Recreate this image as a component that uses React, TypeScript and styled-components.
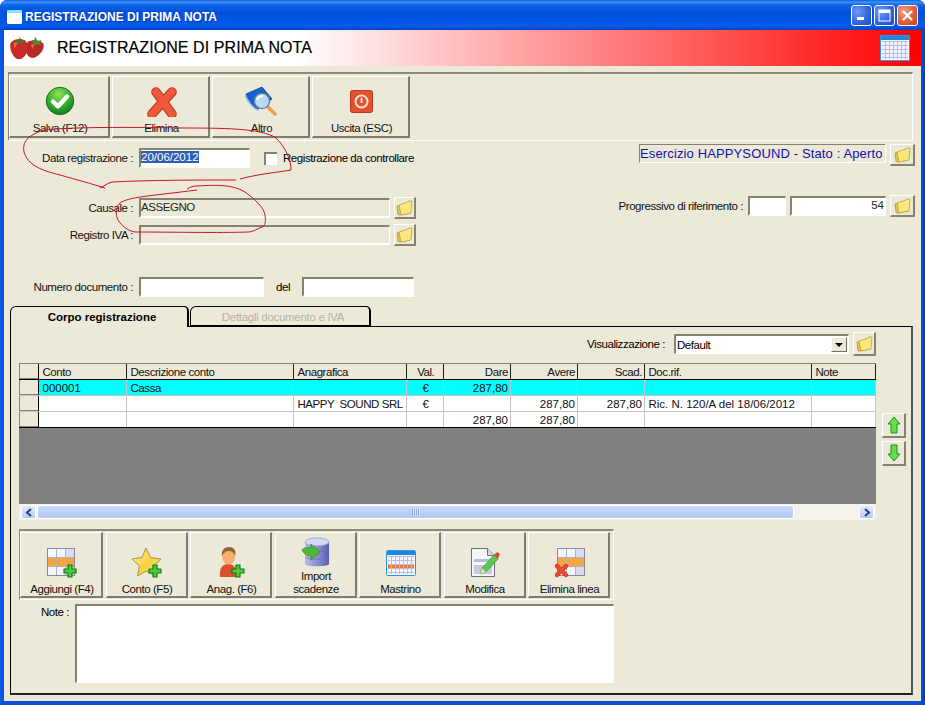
import React from "react";
import styled, { createGlobalStyle, css } from "styled-components";

const Global = createGlobalStyle`
  html, body { margin: 0; padding: 0; background: #fff; }
  body { font-family: "Liberation Sans", Arial, sans-serif; font-size: 12px; color: #000; }
`;

const tightText = css`
  font-size: 11.5px;
  letter-spacing: -0.44px;
`;

const Window = styled.div`
  position: relative;
  width: 925px;
  height: 705px;
  overflow: hidden;
  display: flex;
  flex-direction: column;
  background: linear-gradient(90deg, #0a5ae6 0, #0a50d8 4px, #0a50d8 921px, #0040c0 925px);
  border-radius: 7px 7px 0 0;
`;
const TitleBar = styled.div`
  height: 30px;
  flex: none;
  display: flex;
  align-items: center;
  padding: 3px 7px 0 7px;
  box-sizing: border-box;
  background: linear-gradient(180deg, #0a5fe0 0, #3f90f8 2px, #0f66ea 5px, #0050dc 12px, #0058e6 22px, #0a5ceb 26px, #0040c8 30px);
  color: #fff;
`;
const TitleText = styled.span`
  margin-left: 3px;
  font-weight: bold;
  font-size: 12px;
  white-space: nowrap;
  flex: 1;
  text-shadow: 1px 1px 0 #0a3aa8;
`;
const WinButton = styled.div<{ $close?: boolean }>`
  width: 21px;
  height: 21px;
  margin: -2px 0 0 2px;
  box-sizing: border-box;
  border: 1px solid #fff;
  border-radius: 3px;
  display: flex;
  align-items: center;
  justify-content: center;
  background: ${(p) =>
    p.$close
      ? "radial-gradient(circle at 30% 30%, #f0a08a, #e0603a 55%, #c83a1a)"
      : "radial-gradient(circle at 30% 30%, #6f9cf5, #2f62dc 60%, #1e48c0)"};
`;
const Body = styled.div`
  flex: 1;
  margin: 0 4px 4px 4px;
  background: #ece9d8;
  display: flex;
  flex-direction: column;
  min-height: 0;
`;
const Header = styled.div`
  height: 36px;
  flex: none;
  display: flex;
  align-items: center;
  padding: 0 11px 0 5px;
  background: linear-gradient(90deg, #fff 0, #fff 32%, #ff0000 100%);
`;
const HeaderTitle = styled.div`
  margin-left: 12px;
  flex: 1;
  font-size: 16px;
  letter-spacing: 0.07px;
  white-space: nowrap;
  -webkit-text-stroke: 0.2px #000;
`;
const Toolbar = styled.div`
  margin: 6px 8px 0 4px;
  height: 69px;
  box-sizing: border-box;
  border-top: 2px solid #8c8a78;
  border-left: 1px solid #8c8a78;
  border-bottom: 1px solid #fff;
  border-right: 1px solid #fff;
  padding-top: 2px;
  display: grid;
  grid-template-columns: 101px 98px 98px 98px;
  gap: 2px;
  align-items: start;
`;
const ToolButton = styled.div<{ $top: number; $h: number }>`
  height: ${(p) => p.$h}px;
  box-sizing: border-box;
  padding-top: ${(p) => p.$top}px;
  padding-left: 2px;
  display: flex;
  flex-direction: column;
  align-items: center;
  text-align: center;
  background: #ece9d8;
  border-top: 1px solid #fff;
  border-left: 1px solid #fff;
  border-right: 2px solid #7e7c6c;
  border-bottom: 2px solid #7e7c6c;
  ${tightText}
  line-height: 13px;
  color: #111;
`;
const ToolIcon = styled.div<{ $h: number }>`
  height: ${(p) => p.$h}px;
  display: flex;
  align-items: center;
  justify-content: center;
`;
const ToolLabel = styled.div`
  white-space: nowrap;
`;
const FormArea = styled.div`
  display: flex;
  justify-content: space-between;
  height: 156px;
  flex: none;
  padding-right: 6px;
`;
const FormCol = styled.div`
  display: flex;
  flex-direction: column;
`;
const FormRow = styled.div<{ $mt: number }>`
  display: flex;
  align-items: center;
  height: 20px;
  margin-top: ${(p) => p.$mt}px;
`;
const RowLabel = styled.div`
  width: 129px;
  margin-right: 6px;
  text-align: right;
  ${tightText}
  white-space: nowrap;
  color: #111;
`;
const Field = styled.div<{ $w: number; $disabled?: boolean; $right?: boolean; $ml?: number; $tight?: boolean }>`
  width: ${(p) => p.$w}px;
  height: 20px;
  flex: none;
  margin-left: ${(p) => p.$ml ?? 0}px;
  box-sizing: border-box;
  border-top: 2px solid #85836f;
  border-left: 2px solid #85836f;
  border-right: 1px solid #fff;
  border-bottom: 2px solid #fff;
  background: ${(p) => (p.$disabled ? "#ece9d8" : "#fff")};
  padding: 0 1px 0 0;
  font-size: 11.5px;
  letter-spacing: ${(p) => (p.$tight ? -0.44 : 0)}px;
  line-height: 15px;
  text-align: ${(p) => (p.$right ? "right" : "left")};
  white-space: nowrap;
  overflow: hidden;
  color: #222;
`;
const Selected = styled.span`
  background: #2f5fb5;
  color: #fff;
`;
const Checkbox = styled.div`
  width: 13px;
  height: 13px;
  margin: 1px 0 0 14px;
  box-sizing: border-box;
  border-top: 2px solid #85836f;
  border-left: 2px solid #85836f;
  background: #fff;
`;
const CheckLabel = styled.div`
  margin-left: 6px;
  ${tightText}
  white-space: nowrap;
`;
const FolderButton = styled.div<{ $w?: number; $h?: number; $ml?: number }>`
  width: ${(p) => p.$w ?? 22}px;
  height: ${(p) => p.$h ?? 22}px;
  margin-left: ${(p) => p.$ml ?? 4}px;
  flex: none;
  box-sizing: border-box;
  background: #ece9d8;
  border-top: 1px solid #fff;
  border-left: 1px solid #fff;
  border-right: 2px solid #85836f;
  border-bottom: 2px solid #85836f;
  display: flex;
  align-items: center;
  justify-content: center;
`;
const StatusRow = styled.div`
  display: flex;
  justify-content: flex-end;
  align-items: flex-start;
  margin-top: 3px;
`;
const StatusBox = styled.div`
  width: 247px;
  height: 19px;
  box-sizing: border-box;
  border-top: 1px solid #85836f;
  border-left: 1px solid #85836f;
  border-bottom: 1px solid #fff;
  border-right: 1px solid #fff;
  color: #1010b0;
  font-size: 13px;
  letter-spacing: 0.13px;
  line-height: 17px;
  white-space: nowrap;
`;
const ProgRow = styled.div`
  display: flex;
  align-items: center;
  margin-top: 29px;
  justify-content: flex-end;
`;
const ProgLabel = styled.div`
  ${tightText}
  margin-right: 5px;
  white-space: nowrap;
  color: #111;
`;
const DelLabel = styled.div`
  width: 38px;
  text-align: center;
  ${tightText}
`;
const Tabs = styled.div`
  display: flex;
  margin: 9px 0 0 6px;
  height: 20px;
  flex: none;
  position: relative;
  z-index: 1;
  gap: 1px;
`;
const Tab = styled.div<{ $active?: boolean; $w: number }>`
  width: ${(p) => p.$w}px;
  height: ${(p) => (p.$active ? 21 : 20)}px;
  box-sizing: border-box;
  padding-left: 6px;
  border: 1px solid #000;
  border-right-width: 2px;
  border-bottom: ${(p) => (p.$active ? "none" : "1px solid #000")};
  border-radius: 6px 5px 0 0;
  background: #ece9d8;
  text-align: center;
  font-size: 11.5px;
  letter-spacing: ${(p) => (p.$active ? 0 : -0.3)}px;
  line-height: 20px;
  font-weight: ${(p) => (p.$active ? "bold" : "normal")};
  color: ${(p) => (p.$active ? "#000" : "#b4b2a6")};
`;
const Panel = styled.div`
  flex: none;
  height: 369px;
  margin: 0 8px 0 6px;
  box-sizing: border-box;
  border-top: 1px solid #000;
  border-left: 1px solid #000;
  border-bottom: 2px solid #222;
  border-right: 2px solid #555;
  padding: 5px 0 0 8px;
`;
const ViewRow = styled.div`
  width: 857px;
  height: 24px;
  display: flex;
  align-items: center;
  justify-content: flex-end;
`;
const ViewLabel = styled.span`
  ${tightText}
`;
const Select = styled.div`
  width: 175px;
  height: 20px;
  margin-left: 9px;
  box-sizing: border-box;
  border-top: 2px solid #85836f;
  border-left: 2px solid #85836f;
  border-right: 1px solid #fff;
  border-bottom: 1px solid #fff;
  background: #fff;
  display: flex;
  align-items: center;
  justify-content: space-between;
  padding: 0 1px 0 1px;
  ${tightText}
`;
const SelectArrow = styled.div`
  width: 16px;
  height: 15px;
  box-sizing: border-box;
  background: #ece9d8;
  border-top: 1px solid #fff;
  border-left: 1px solid #fff;
  border-right: 1px solid #716f64;
  border-bottom: 1px solid #716f64;
  display: flex;
  align-items: center;
  justify-content: center;
  &::after {
    content: "";
    border-left: 4px solid transparent;
    border-right: 4px solid transparent;
    border-top: 4px solid #000;
  }
`;
const GridWrap = styled.div`
  display: flex;
  margin-top: 7px;
`;
const DataGrid = styled.div`
  width: 857px;
  height: 157px;
  flex: none;
  display: flex;
  flex-direction: column;
  box-sizing: border-box;
  border-top: 1px solid #85836f;
  background: #808080;
`;
const Row = styled.div<{ $h: number; $bg: string; $line: string }>`
  display: grid;
  grid-template-columns: 20px 88px 167px 113px 37px 67px 67px 67px 167px 64px;
  height: ${(p) => p.$h}px;
  flex: none;
  box-sizing: border-box;
  background: ${(p) => p.$bg};
  border-bottom: ${(p) => `1px solid ${p.$line}`};
`;
const Cell = styled.div<{ $right?: boolean; $center?: boolean; $line: string; $digits?: boolean }>`
  box-sizing: border-box;
  border-right: ${(p) => `1px solid ${p.$line}`};
  padding: 1px 2px 0 3.5px;
  font-size: 11.5px;
  letter-spacing: ${(p) => (p.$digits ? 0 : -0.44)}px;
  line-height: 14px;
  white-space: pre;
  overflow: hidden;
  text-align: ${(p) => (p.$right ? "right" : p.$center ? "center" : "left")};
  color: #111;
`;
const Indicator = styled.div`
  box-sizing: border-box;
  background: #ece9d8;
  border-right: 1px solid #000;
  border-left: 1px solid #85836f;
  box-shadow: inset 0 -1px 0 #85836f;
`;
const GridGap = styled.div`
  flex: 1;
  background: #808080;
`;
const ScrollBar = styled.div`
  height: 16px;
  flex: none;
  box-sizing: border-box;
  background: #f4f2ea;
  display: flex;
  align-items: center;
  padding: 1px 2px 1px 2px;
`;
const ScrollButton = styled.div`
  width: 15px;
  height: 14px;
  flex: none;
  border-radius: 2px;
  border: 1px solid #fff;
  box-sizing: border-box;
  background: linear-gradient(180deg, #e2ebfd, #b6caf5);
  display: flex;
  align-items: center;
  justify-content: center;
`;
const ScrollThumb = styled.div`
  width: 757px;
  height: 14px;
  flex: none;
  margin-left: 1px;
  box-sizing: border-box;
  border: 1px solid #fff;
  border-radius: 3px;
  background: linear-gradient(180deg, #c8d8f8, #b4c9f3);
  display: flex;
  align-items: center;
  justify-content: center;
`;
const Grip = styled.div`
  width: 8px;
  height: 6px;
  background: repeating-linear-gradient(90deg, #8fa8dc 0, #8fa8dc 1px, #e0e8fa 1px, #e0e8fa 2px);
`;
const ScrollTrack = styled.div`
  flex: 1;
`;
const SideCol = styled.div`
  margin: 50px 0 0 6px;
  display: flex;
  flex-direction: column;
  gap: 3px;
`;
const LowerBar = styled.div`
  width: 595px;
  height: 71px;
  margin-top: 9px;
  box-sizing: border-box;
  border-top: 2px solid #8c8a78;
  border-left: 1px solid #8c8a78;
  border-bottom: 1px solid #fff;
  border-right: 1px solid #fff;
  padding: 1px 0 0 0;
  display: grid;
  grid-template-columns: 83px repeat(6, 82px);
  gap: 2.5px;
  align-items: start;
`;
const NoteRow = styled.div`
  display: flex;
  width: 595px;
  margin-top: 4px;
`;
const NoteLabel = styled.div`
  width: 50px;
  margin-right: 6px;
  text-align: right;
  ${tightText}
  line-height: 15px;
  padding-top: 1px;
`;
const NoteBox = styled.div`
  flex: 1;
  height: 79px;
  box-sizing: border-box;
  border-top: 2px solid #85836f;
  border-left: 2px solid #85836f;
  border-right: 1px solid #fff;
  border-bottom: 1px solid #fff;
  background: #fff;
`;
const Annotation = styled.svg`
  position: absolute;
  left: 0;
  top: 0;
  width: 925px;
  height: 705px;
  pointer-events: none;
`;

const Plus = ({ x, y }: { x: number; y: number }) => (
  <path
    transform={`translate(${x} ${y})`}
    d="M4 0h4v4h4v4H8v4H4V8H0V4h4z"
    fill="#55c83c"
    stroke="#0f7a14"
    strokeWidth="1.2"
    strokeLinejoin="round"
  />
);

const Strawberries = () => (
  <svg width="36" height="24" viewBox="0 0 38 26">
    <path d="M20 6c6-2 15-1 17 3 1 5-3 11-9 14-4 2-9-1-10-6-1-4 0-8 2-11z" fill="#b92a26" />
    <path d="M1 8c3-5 12-6 16-3 4 4 4 11 0 16-3 4-7 5-10 3C3 21 0 14 1 8z" fill="#c82a26" />
    <path d="M5 8c2-2 5-2 6-1-3 1-5 4-5 7-1-2-2-4-1-6z" fill="#e66a5a" />
    <path d="M24 9c2-1 4-1 5 0-2 1-3 3-4 5-1-2-2-3-1-5z" fill="#dc5c4e" />
    <path d="M6 4l4 1 1-4 2 4 4-1-2 3-5 1-3-1z" fill="#4d7a2a" />
    <path d="M24 5l3-1 1-3 2 4 5 0-2 3 3 3-5-2-4 1z" fill="#55852e" />
  </svg>
);
const Calendar = ({ w, h, hot }: { w: number; h: number; hot?: boolean }) => (
  <svg width={w} height={h} viewBox="0 0 30 26">
    <rect x="0.5" y="0.5" width="29" height="25" rx="1" fill="#f4f6ff" stroke="#2f96e8" />
    <rect x="1" y="1" width="28" height="4" fill="#1f86e0" />
    {hot && <rect x="2" y="14" width="26" height="4" fill="#f47a3c" />}
    {[6, 10, 14, 18, 22].map((y) => (
      <line key={y} x1="2" x2="28" y1={y + 0.5} y2={y + 0.5} stroke="#b9bce0" />
    ))}
    {[5, 9, 13, 17, 21, 25].map((x) => (
      <line key={x} y1="6" y2="24" x1={x + 0.5} x2={x + 0.5} stroke="#b9bce0" />
    ))}
  </svg>
);
const Folder = () => (
  <svg width="17" height="16" viewBox="0 0 17 16">
    <path d="M1 6l1 8c0 1 1 1 2 1l10-2 1-9z" fill="#e8c64a" stroke="#a08a30" strokeWidth="0.7" />
    <path d="M3 5l9-3 1-1 3 0-1 12-10 2z" fill="#fbe77e" stroke="#b09a38" strokeWidth="0.7" />
  </svg>
);
const CheckIcon = () => (
  <svg width="30" height="30" viewBox="0 0 30 30">
    <defs>
      <radialGradient id="chk" cx="45%" cy="25%" r="80%">
        <stop offset="0" stopColor="#8ee05a" />
        <stop offset="0.6" stopColor="#2fa82a" />
        <stop offset="1" stopColor="#0c7a1a" />
      </radialGradient>
    </defs>
    <circle cx="15" cy="15" r="13.7" fill="url(#chk)" stroke="#15701c" />
    <path d="M8 15.5l5 5 9-10" fill="none" stroke="#fff" strokeWidth="4.4" strokeLinecap="round" strokeLinejoin="round" />
  </svg>
);
const CrossIcon = () => (
  <svg width="30" height="32" viewBox="0 0 30 32">
    <g transform="translate(0 2)">
      <path d="M5 27L25 5M9 5l16 22" stroke="#b8331a" strokeWidth="9.5" strokeLinecap="round" />
      <path d="M5 27L25 5M9 5l16 22" stroke="#f0583a" strokeWidth="7.5" strokeLinecap="round" />
    </g>
  </svg>
);
const BookIcon = () => (
  <svg width="34" height="30" viewBox="0 0 34 30">
    <path d="M1 8L17 1l10 12-14 10C8 21 3 14 1 8z" fill="#1760d0" stroke="#0c3f9c" strokeWidth="0.8" />
    <path d="M1 8c2 6 7 13 12 15l1 2C8 23 2 16 0 10z" fill="#7fb0ee" />
    <line x1="23" y1="21" x2="30" y2="28" stroke="#e8a050" strokeWidth="3.6" strokeLinecap="round" />
    <circle cx="17" cy="15" r="7.6" fill="#b8daf4" stroke="#6a7f98" strokeWidth="1.4" />
    <path d="M12 14c1-3 4-4 6-4" stroke="#fff" strokeWidth="2" fill="none" />
  </svg>
);
const PowerIcon = () => (
  <svg width="23" height="23" viewBox="0 0 23 23">
    <rect x="0.5" y="0.5" width="22" height="22" rx="2" fill="#e2502e" stroke="#b83a1e" />
    <circle cx="11.5" cy="11.5" r="6" fill="none" stroke="#fbe0d0" strokeWidth="2" />
    <line x1="11.5" y1="8" x2="11.5" y2="13" stroke="#fbe0d0" strokeWidth="2" />
  </svg>
);
const GridCells = () => (
  <>
    <rect x="0.5" y="0.5" width="27" height="27" fill="#f4f6ff" stroke="#8a8a92" />
    <rect x="1" y="10" width="26" height="9" fill="#f5a53c" />
    <rect x="19" y="1" width="8" height="9" fill="#d8dcf4" />
    <rect x="19" y="19" width="8" height="8" fill="#d8dcf4" />
    <path d="M9.5 1v26M18.5 1v26M1 9.5h26M1 18.5h26" stroke="#b4b4c0" />
  </>
);
const GridPlusIcon = () => (
  <svg width="30" height="30" viewBox="0 0 30 30">
    <GridCells />
    <Plus x={17} y={17} />
  </svg>
);
const GridXIcon = () => (
  <svg width="30" height="30" viewBox="0 0 30 30">
    <g transform="translate(2 0)">
      <GridCells />
    </g>
    <path d="M2 27l9-9M2 18l9 9" stroke="#b8331a" strokeWidth="4.4" strokeLinecap="round" />
    <path d="M2 27l9-9M2 18l9 9" stroke="#ee4a30" strokeWidth="3" strokeLinecap="round" />
  </svg>
);
const StarIcon = () => (
  <svg width="32" height="32" viewBox="0 0 32 32">
    <defs>
      <linearGradient id="star" x1="0" y1="0" x2="1" y2="1">
        <stop offset="0" stopColor="#fdf3b0" />
        <stop offset="0.55" stopColor="#f6d23c" />
        <stop offset="1" stopColor="#fbeea0" />
      </linearGradient>
    </defs>
    <path
      d="M15 1l4.5 9.5 10.5 1.5-7.5 7 2 10-9.5-5-8.5 5 2-10L1 12l10-1.500z"
      fill="url(#star)"
      stroke="#a08a3a"
      strokeWidth="0.9"
      strokeLinejoin="round"
    />
    <Plus x={18} y={18} />
  </svg>
);
const PersonIcon = () => (
  <svg width="28" height="32" viewBox="0 0 28 32">
    <path d="M2 30c-1-8 2-13 8-13s9 4 10 13z" fill="#d8522a" />
    <ellipse cx="10.500" cy="9.500" rx="6.500" ry="8" fill="#f4b070" />
    <path d="M4 9C3 3 7 0 11 0s8 3 6 9c-1-3-3-5-6-5S5 6 4 9z" fill="#8a6a2a" />
    <Plus x={14} y={18} />
  </svg>
);
const DbIcon = () => (
  <svg width="30" height="32" viewBox="0 0 30 32">
    <defs>
      <linearGradient id="db" x1="0" x2="1" y1="0" y2="0">
        <stop offset="0" stopColor="#b8bcec" />
        <stop offset="0.6" stopColor="#8288cc" />
        <stop offset="1" stopColor="#5a5ea8" />
      </linearGradient>
    </defs>
    <path d="M4 5v22c0 3 24 3 24 0V5z" fill="url(#db)" />
    <ellipse cx="16" cy="5" rx="12" ry="4" fill="#d4d8f6" stroke="#8a8ecc" strokeWidth="0.7" />
    <path d="M4 12c2 3 22 3 24 0M4 20c2 3 22 3 24 0" stroke="#6a6eb4" strokeWidth="0.7" fill="none" />
    <path d="M1 13c3-3 6-3 9-2v-4l9 8-9 8v-4c-4 0-7-2-9-6z" fill="#4fb83a" stroke="#2e8a24" strokeWidth="0.7" />
  </svg>
);
const DocIcon = () => (
  <svg width="30" height="32" viewBox="0 0 30 32">
    <path d="M1.500 1.500h16l7 7v21h-23z" fill="#f3f5fb" stroke="#6a6e80" />
    <path d="M17.500 1.500v7h7" fill="#cfd6ea" stroke="#6a6e80" />
    <rect x="4" y="12" width="18" height="3" fill="#b8bcd0" />
    <rect x="4" y="18" width="18" height="9" fill="#c4c8e0" />
    <path d="M10 27l2-6L24 8l4 4-12 13z" fill="#5ec84a" stroke="#2e8a24" strokeWidth="0.6" />
    <path d="M24 8l2-2c1-1 2-1 3 0s1 2 0 3l-1 3z" fill="#d8483a" />
    <path d="M10 27l2-6 4 4z" fill="#f0d8b0" />
  </svg>
);
const ArrowIcon = ({ down }: { down?: boolean }) => (
  <svg width="14" height="18" viewBox="0 0 14 18">
    <path
      transform={down ? "rotate(180 7 9)" : undefined}
      d="M7 1l6 7H10v9H4V8H1z"
      fill="#62e04a"
      stroke="#1f8a24"
      strokeLinejoin="round"
    />
  </svg>
);
const Chevron = ({ right }: { right?: boolean }) => (
  <svg width="8" height="9" viewBox="0 0 8 9">
    <path d={right ? "M2 1l4 3.500L2 8" : "M6 1L2 4.500 6 8"} fill="none" stroke="#24408c" strokeWidth="2" />
  </svg>
);

const columns: { text: string; right?: boolean; center?: boolean }[] = [
  { text: "Conto" },
  { text: "Descrizione conto" },
  { text: "Anagrafica" },
  { text: "Val.", center: true },
  { text: "Dare", right: true },
  { text: "Avere", right: true },
  { text: "Scad.", right: true },
  { text: "Doc.rif." },
  { text: "Note" },
];
const rows: { bg: string; cells: string[] }[] = [
  { bg: "#00ffff", cells: ["000001", "Cassa", "", "€", "287,80", "", "", "", ""] },
  { bg: "#fff", cells: ["", "", "HAPPY  SOUND SRL", "€", "", "287,80", "287,80", "Ric. N. 120/A del 18/06/2012", ""] },
  { bg: "#fff", cells: ["", "", "", "", "287,80", "287,80", "", "", ""] },
];
const topButtons = [
  { label: "Salva (F12)", icon: <CheckIcon /> },
  { label: "Elimina", icon: <CrossIcon /> },
  { label: "Altro", icon: <BookIcon /> },
  { label: "Uscita (ESC)", icon: <PowerIcon /> },
];
const lowerButtons = [
  { label: ["Aggiungi (F4)"], icon: <GridPlusIcon />, h: 40, top: 10 },
  { label: ["Conto (F5)"], icon: <StarIcon />, h: 40, top: 10 },
  { label: ["Anag. (F6)"], icon: <PersonIcon />, h: 40, top: 10 },
  { label: ["Import", "scadenze"], icon: <DbIcon />, h: 34, top: 3 },
  { label: ["Mastrino"], icon: <Calendar w={30} h={26} hot />, h: 40, top: 10 },
  { label: ["Modifica"], icon: <DocIcon />, h: 40, top: 10 },
  { label: ["Elimina linea"], icon: <GridXIcon />, h: 40, top: 10 },
];

export default function App() {
  return (
    <Window>
      <Global />
      <TitleBar>
        <svg width="15" height="14" viewBox="0 0 15 14">
          <rect width="15" height="14" rx="1.500" fill="#fff" />
          <rect width="15" height="3" rx="1" fill="#7fe8f8" />
        </svg>
        <TitleText>REGISTRAZIONE DI PRIMA NOTA</TitleText>
        <WinButton>
          <svg width="11" height="11" viewBox="0 0 11 11">
            <rect x="1" y="7" width="7" height="3" fill="#fff" />
          </svg>
        </WinButton>
        <WinButton>
          <svg width="13" height="13" viewBox="0 0 13 13">
            <rect x="1" y="1" width="11" height="11" fill="none" stroke="#fff" />
            <rect x="1" y="1" width="11" height="3" fill="#fff" />
          </svg>
        </WinButton>
        <WinButton $close>
          <svg width="13" height="13" viewBox="0 0 13 13">
            <path d="M2 2l9 9M11 2l-9 9" stroke="#fff" strokeWidth="2.200" />
          </svg>
        </WinButton>
      </TitleBar>
      <Body>
        <Header>
          <Strawberries />
          <HeaderTitle>REGISTRAZIONE DI PRIMA NOTA</HeaderTitle>
          <Calendar w={30} h={26} />
        </Header>
        <Toolbar>
          {topButtons.map((b) => (
            <ToolButton key={b.label} $top={3} $h={62}>
              <ToolIcon $h={42}>{b.icon}</ToolIcon>
              <ToolLabel>{b.label}</ToolLabel>
            </ToolButton>
          ))}
        </Toolbar>
        <FormArea>
          <FormCol>
            <FormRow $mt={7}>
              <RowLabel>Data registrazione :</RowLabel>
              <Field $w={111}>
                <Selected>20/06/2012</Selected>
              </Field>
              <Checkbox />
              <CheckLabel>Registrazione da controllare</CheckLabel>
            </FormRow>
            <FormRow $mt={30}>
              <RowLabel>Causale :</RowLabel>
              <Field $w={251} $disabled $tight>
                ASSEGNO
              </Field>
              <FolderButton>
                <Folder />
              </FolderButton>
            </FormRow>
            <FormRow $mt={7}>
              <RowLabel>Registro IVA :</RowLabel>
              <Field $w={251} $disabled />
              <FolderButton>
                <Folder />
              </FolderButton>
            </FormRow>
            <FormRow $mt={32}>
              <RowLabel>Numero documento :</RowLabel>
              <Field $w={125} />
              <DelLabel>del</DelLabel>
              <Field $w={112} />
            </FormRow>
          </FormCol>
          <FormCol>
            <StatusRow>
              <StatusBox>Esercizio HAPPYSOUND - Stato : Aperto</StatusBox>
              <FolderButton $w={25}>
                <Folder />
              </FolderButton>
            </StatusRow>
            <ProgRow>
              <ProgLabel>Progressivo di riferimento :</ProgLabel>
              <Field $w={38} />
              <Field $w={96} $ml={4} $right>
                54
              </Field>
              <FolderButton $w={25}>
                <Folder />
              </FolderButton>
            </ProgRow>
          </FormCol>
        </FormArea>
        <Tabs>
          <Tab $active $w={179}>
            Corpo registrazione
          </Tab>
          <Tab $w={181}>Dettagli documento e IVA</Tab>
        </Tabs>
        <Panel>
          <ViewRow>
            <ViewLabel>Visualizzazione :</ViewLabel>
            <Select>
              Default
              <SelectArrow />
            </Select>
            <FolderButton $w={23} $h={24}>
              <Folder />
            </FolderButton>
          </ViewRow>
          <GridWrap>
            <DataGrid>
              <Row $h={16} $bg="#ece9d8" $line="#000">
                <Indicator />
                {columns.map((c) => (
                  <Cell key={c.text} $right={c.right} $center={c.center} $line="#222">
                    {c.text}
                  </Cell>
                ))}
              </Row>
              {rows.map((r, i) => (
                <Row key={i} $h={16} $bg={r.bg} $line={i === 2 ? "#000" : "#c4c4c4"}>
                  <Indicator />
                  {r.cells.map((t, j) => (
                    <Cell
                      key={j}
                      $right={columns[j].right}
                      $center={columns[j].center}
                      $line="#c4c4c4"
                      $digits={/\d|€/.test(t)}
                    >
                      {t}
                    </Cell>
                  ))}
                </Row>
              ))}
              <GridGap />
              <ScrollBar>
                <ScrollButton>
                  <Chevron />
                </ScrollButton>
                <ScrollThumb>
                  <Grip />
                </ScrollThumb>
                <ScrollTrack />
                <ScrollButton>
                  <Chevron right />
                </ScrollButton>
              </ScrollBar>
            </DataGrid>
            <SideCol>
              <FolderButton $w={24} $h={25} $ml={0}>
                <ArrowIcon />
              </FolderButton>
              <FolderButton $w={24} $h={25} $ml={0}>
                <ArrowIcon down />
              </FolderButton>
            </SideCol>
          </GridWrap>
          <LowerBar>
            {lowerButtons.map((b) => (
              <ToolButton key={b.label[0]} $top={b.top} $h={66}>
                <ToolIcon $h={b.h}>{b.icon}</ToolIcon>
                {b.label.map((l) => (
                  <ToolLabel key={l}>{l}</ToolLabel>
                ))}
              </ToolButton>
            ))}
          </LowerBar>
          <NoteRow>
            <NoteLabel>Note :</NoteLabel>
            <NoteBox />
          </NoteRow>
        </Panel>
      </Body>
      <Annotation viewBox="0 0 925 705">
        <path
          d="M105 188C92 184 78 180 60 175C40 170 28 165 24 152C22 142 28 135 44 130C70 127 130 127 180 128C220 128 262 128 276 138C286 148 291 160 291 170C280 172 258 174 240 179M100 188C104 186 108 183 112 182C150 180 200 180 236 180"
          fill="none"
          stroke="#c8142a"
        />
        <path
          d="M187 189C190 187 193 186 197 186C215 185 232 184 245 192C256 200 264 208 265 215C266 222 265 226 262 227C255 230 252 232 248 232C220 233 170 232 135 232C128 231 122 226 118 220C115 214 116 207 120 203C128 197 150 196 197 190"
          fill="none"
          stroke="#c8142a"
        />
      </Annotation>
    </Window>
  );
}
